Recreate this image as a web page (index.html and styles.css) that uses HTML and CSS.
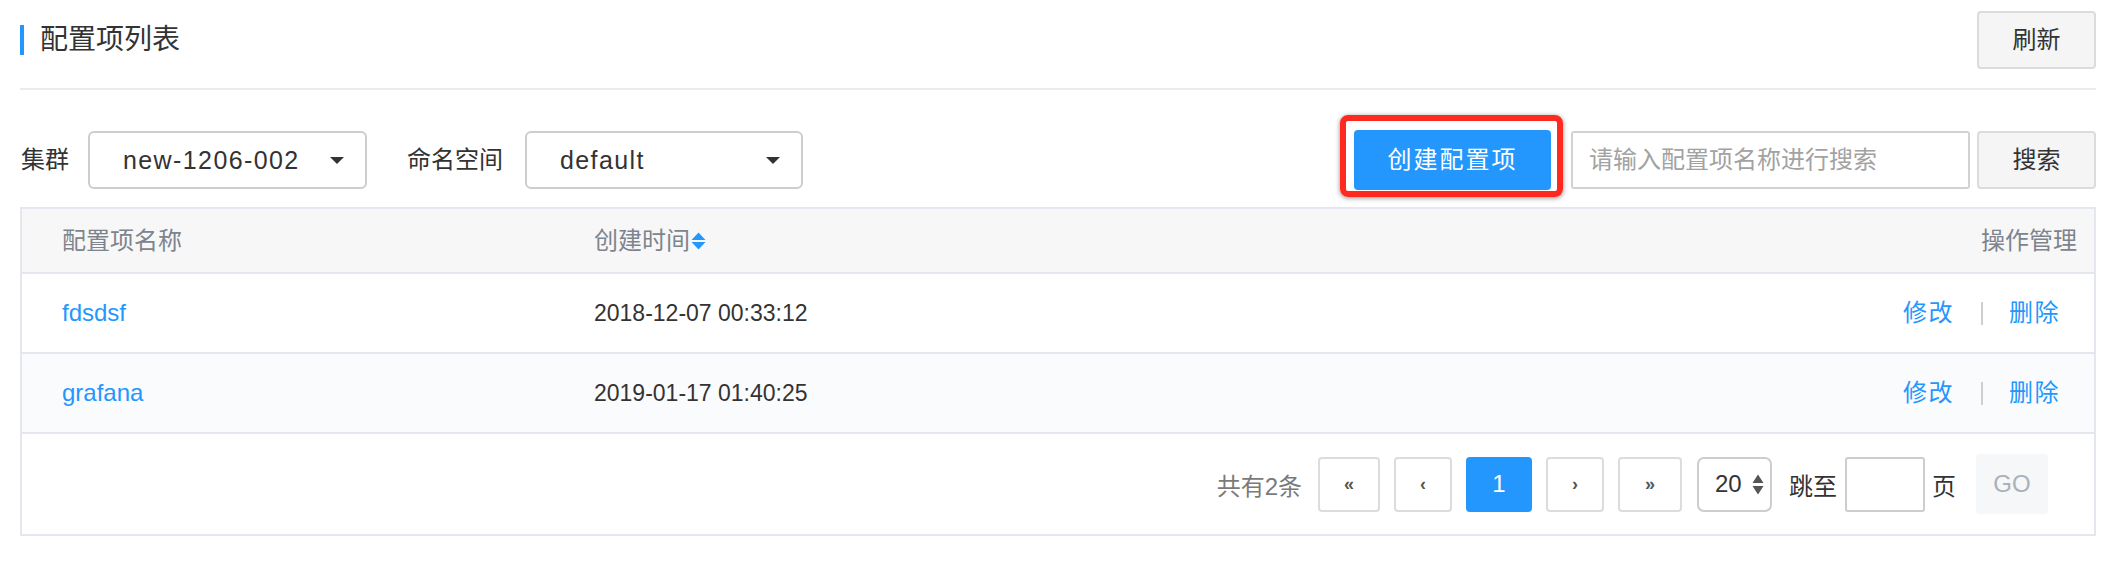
FILE: index.html
```html
<!DOCTYPE html>
<html lang="zh-CN">
<head>
<meta charset="utf-8">
<title>配置项列表</title>
<link rel="stylesheet" href="styles.css">
</head>
<body>
<div class="page">
  <div class="title-row">
    <h2 class="title">配置项列表</h2>
    <button class="btn btn-default refresh">刷新</button>
  </div>
  <div class="divider"></div>

  <div class="toolbar">
    <div class="filters">
      <span class="filter-label">集群</span>
      <div class="select"><span>new-1206-002</span><span class="caret"></span></div>
      <span class="filter-label ns">命名空间</span>
      <div class="select select-ns"><span>default</span><span class="caret"></span></div>
    </div>
    <div class="actions">
      <span class="highlight"><button class="btn create">创建配置项</button></span>
      <input class="search-input" type="text" placeholder="请输入配置项名称进行搜索">
      <button class="btn btn-default search">搜索</button>
    </div>
  </div>

  <div class="table">
    <div class="row head">
      <div class="cell cell-name">配置项名称</div>
      <div class="cell cell-time">创建时间<svg class="sort" width="15" height="18" viewBox="0 0 15 18"><path d="M0.5 8 L7.5 0.5 L14.5 8 Z" fill="#2397fd"/><path d="M0.5 10 L14.5 10 L7.5 17.5 Z" fill="#2397fd"/></svg></div>
      <div class="cell cell-ops">操作管理</div>
    </div>
    <div class="row body-row">
      <div class="cell cell-name"><a class="link name">fdsdsf</a></div>
      <div class="cell cell-time date">2018-12-07 00:33:12</div>
      <div class="cell cell-ops ops"><a class="link op">修改</a><span class="sep"></span><a class="link op">删除</a></div>
    </div>
    <div class="row body-row alt">
      <div class="cell cell-name"><a class="link name">grafana</a></div>
      <div class="cell cell-time date">2019-01-17 01:40:25</div>
      <div class="cell cell-ops ops"><a class="link op">修改</a><span class="sep"></span><a class="link op">删除</a></div>
    </div>
    <div class="footer">
      <span class="total">共有2条</span>
      <button class="pg pg-first">«</button>
      <button class="pg pg-prev">‹</button>
      <button class="pg pg-active">1</button>
      <button class="pg pg-next">›</button>
      <button class="pg pg-last">»</button>
      <div class="size-select"><span>20</span><svg width="12" height="21" viewBox="0 0 12 21"><path d="M0.5 9 L6 0.5 L11.5 9 Z" fill="#555"/><path d="M0.5 12 L11.5 12 L6 20.5 Z" fill="#555"/></svg></div>
      <span class="jump-label">跳至</span>
      <input class="jump-input" type="text">
      <span class="page-label">页</span>
      <button class="go">GO</button>
    </div>
  </div>
</div>
</body>
</html>
```

FILE: styles.css
```css
* { box-sizing: border-box; }

body {
  margin: 0;
  background: #fff;
  color: #333;
  font-family: "Liberation Sans", "Noto Sans CJK SC", sans-serif;
}

.page {
  width: 2076px;
  margin-left: 20px;
  padding-top: 11px;
}

/* title */
.title-row {
  display: flex;
  justify-content: space-between;
  align-items: center;
  height: 58px;
}

.title {
  margin: 0;
  font-size: 28px;
  font-weight: normal;
  line-height: 30px;
  border-left: 4px solid #2397fd;
  padding-left: 16px;
  color: #333;
}

.btn {
  font-family: inherit;
  font-size: 24px;
  line-height: 1;
  border-radius: 4px;
  display: inline-flex;
  align-items: center;
  justify-content: center;
  padding: 0;
  cursor: pointer;
}

.btn-default {
  background: #f5f5f5;
  border: 2px solid #dcdcdc;
  color: #333;
}

.refresh { width: 119px; height: 58px; }

.divider {
  height: 2px;
  background: #ebebeb;
  margin-top: 19px;
}

/* toolbar */
.toolbar {
  display: flex;
  justify-content: space-between;
  align-items: center;
  height: 58px;
  margin-top: 41px;
}

.filters { display: flex; align-items: center; }

.filter-label {
  font-size: 24px;
  line-height: 1;
  margin-left: 1px;
  margin-right: 19px;
  color: #333;
}

.filter-label.ns { margin-left: 40px; margin-right: 22px; }

.select {
  width: 279px;
  height: 58px;
  border: 2px solid #cdcdcd;
  border-radius: 6px;
  display: flex;
  align-items: center;
  justify-content: space-between;
  padding: 0 21px 0 33px;
  font-size: 25px;
  letter-spacing: 1.4px;
  color: #333;
}

.select-ns { width: 278px; }

.caret {
  width: 0;
  height: 0;
  border-left: 7.5px solid transparent;
  border-right: 7.5px solid transparent;
  border-top: 7px solid #333;
}

.actions { display: flex; align-items: center; }

.highlight {
  position: relative;
  display: flex;
  margin-right: 20px;
}

.highlight::after {
  content: "";
  position: absolute;
  top: -15px;
  left: -14px;
  right: -12px;
  bottom: -7px;
  border: 6px solid #ff2a1f;
  border-radius: 8px;
  box-shadow: 0 1px 5px rgba(0, 0, 0, 0.45);
  pointer-events: none;
}

.create {
  width: 197px;
  height: 60px;
  background: #2397fd;
  color: #fff;
  border: none;
  border-radius: 4px;
  letter-spacing: 2px;
}

.search-input {
  width: 399px;
  height: 58px;
  border: 2px solid #d2d2d2;
  border-radius: 3px;
  padding: 0 16px;
  font-size: 24px;
  font-family: inherit;
  margin-right: 7px;
  outline: none;
}

.search-input::placeholder { color: #a2a2a2; }

.search { width: 119px; height: 58px; }

/* table */
.table {
  margin-top: 18px;
  border: 2px solid #e4e8ee;
}

.row {
  display: grid;
  grid-template-columns: 572px 1fr 400px;
  align-items: center;
  border-bottom: 2px solid #e4e8ee;
}

.head {
  height: 65px;
  background: #f7f7f7;
  color: #7d848e;
  font-size: 24px;
}

.body-row { height: 80px; background: #fff; }
.body-row.alt { background: #fafbfd; }

.cell { line-height: 1; }

.cell-name { padding-left: 40px; }

.cell-time { display: flex; align-items: center; }

.sort { margin-left: 1px; }

.cell-ops { text-align: right; padding-right: 17px; }

.link { color: #2397fd; text-decoration: none; cursor: pointer; }

.name { font-size: 24px; }

.date { font-size: 23px; color: #333; }

.ops {
  display: flex;
  justify-content: flex-end;
  align-items: center;
  padding-right: 34px;
}

.op { font-size: 24px; letter-spacing: 1.5px; }

.sep {
  width: 2px;
  height: 23px;
  background: #cfcfcf;
  margin: 0 26px 0 27px;
}

/* footer / pagination */
.footer {
  height: 100px;
  display: flex;
  justify-content: flex-end;
  align-items: center;
  padding-right: 46px;
}

.total {
  color: #7a7a7a;
  font-size: 24px;
  margin-right: 16px;
}

.pg {
  height: 55px;
  border: 2px solid #dcdcdc;
  border-radius: 4px;
  background: #fff;
  color: #555;
  font-family: inherit;
  font-size: 18px;
  font-weight: bold;
  display: flex;
  align-items: center;
  justify-content: center;
  padding: 0;
  margin-right: 14px;
}

.pg-first { width: 62px; }
.pg-prev { width: 58px; }
.pg-active {
  width: 66px;
  background: #2397fd;
  border-color: #2397fd;
  color: #fff;
  font-size: 24px;
  font-weight: normal;
}
.pg-next { width: 58px; }
.pg-last { width: 64px; margin-right: 15px; }

.size-select {
  width: 75px;
  height: 55px;
  border: 2px solid #cdcdcd;
  border-radius: 7px;
  display: flex;
  align-items: center;
  padding-left: 16px;
  gap: 10px;
  font-size: 24px;
  color: #333;
  margin-right: 17px;
}

.jump-label {
  font-size: 24px;
  margin-right: 8px;
}

.jump-input {
  width: 80px;
  height: 55px;
  border: 2px solid #cdcdcd;
  border-radius: 3px;
  margin-right: 7px;
  outline: none;
}

.page-label {
  font-size: 24px;
  margin-right: 20px;
}

.go {
  width: 72px;
  height: 60px;
  background: #f6f7f8;
  color: #aab1b9;
  border: none;
  border-radius: 3px;
  font-family: inherit;
  font-size: 24px;
  padding: 0;
}
```
